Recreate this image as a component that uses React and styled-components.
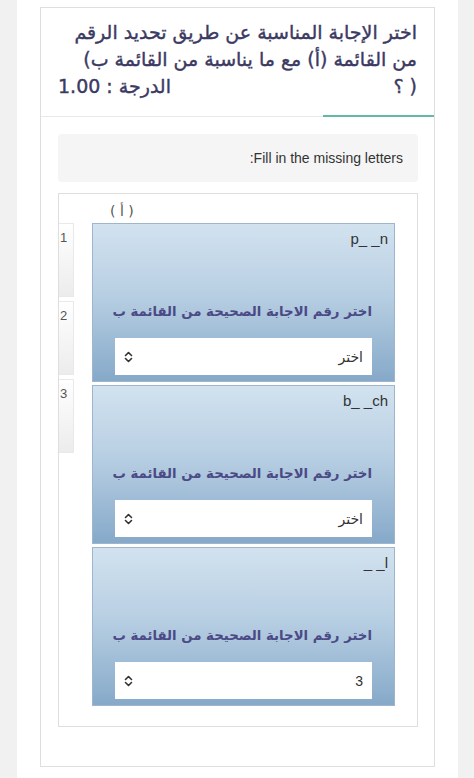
import React from "react";
import styled, { createGlobalStyle } from "styled-components";

const TITLE_INK = "#3c3a62";
const PROMPT_INK = "#4b4a86";
const LINE = "#dedede";

const GlobalStyle = createGlobalStyle`
  body {
    margin: 0;
    background: #f1f1f1;
    font-family: "Liberation Sans", "DejaVu Sans", sans-serif;
  }
`;

const Page = styled.div`
  margin: 0 16px 0 17px;
  min-height: 778px;
  box-sizing: border-box;
  background: #fff;
  padding: 7px 23px 12px;
`;

const Card = styled.div`
  border: 1px solid ${LINE};
  padding-bottom: 39px;
`;

const Head = styled.div`
  direction: rtl;
  padding: 11px 17px 16px 17px;
  color: ${TITLE_INK};
  font-family: "DejaVu Sans", sans-serif;
  font-size: 19px;
  line-height: 27px;
  -webkit-text-stroke: 0.4px ${TITLE_INK};
`;

const HeadLine = styled.div`
  display: flex;
  justify-content: space-between;
  white-space: nowrap;
`;

const Grade = styled.span`
  font-size: 19px;
`;

const Paren = styled.bdo``;

const Divider = styled.div`
  height: 1px;
  background: #e9e9e9;
  display: flex;
  justify-content: flex-end;
`;

const Accent = styled.div`
  width: 111px;
  height: 2px;
  margin-top: -1px;
  background: #62b9a8;
`;

const Body = styled.div`
  padding: 17px 16px 0 17px;
`;

const Instruction = styled.div`
  direction: rtl;
  background: #f5f5f5;
  border-radius: 4px;
  height: 48px;
  display: flex;
  align-items: center;
  padding: 0 15px;
  font-size: 14px;
  color: #333;
`;

const MatchBox = styled.div`
  margin-top: 11px;
  border: 1px solid ${LINE};
  padding-bottom: 20px;
  display: grid;
  grid-template-columns: 15px 303px;
  column-gap: 18px;
`;

const ColHead = styled.div`
  grid-column: 2;
  height: 29px;
  box-sizing: border-box;
  padding: 5px 0 0 18px;
  display: flex;
  align-items: center;
  color: #555;
  font-size: 14px;
  font-family: "DejaVu Sans", sans-serif;
  letter-spacing: 1px;
`;

const Numbers = styled.div`
  grid-column: 1;
  display: flex;
  flex-direction: column;
  gap: 4px;
`;

const NumCell = styled.div`
  height: 74px;
  box-sizing: border-box;
  border: 1px solid #e9e9e9;
  border-left: none;
  background: linear-gradient(#ffffff, #ececec);
  padding: 6px 0 0 1px;
  font-size: 13px;
  color: #555;
`;

const Items = styled.div`
  grid-column: 2;
  display: flex;
  flex-direction: column;
  gap: 3px;
`;

const Item = styled.div`
  direction: rtl;
  height: 159px;
  box-sizing: border-box;
  border: 1px solid #9db6cd;
  background: linear-gradient(#d2e2ef 0%, #b8cfe3 45%, #86a9c9 100%);
  padding: 5px 6px 7px 22px;
  display: flex;
  flex-direction: column;
`;

const Word = styled.div`
  font-size: 15px;
  line-height: 20px;
  color: #333;
`;

const Prompt = styled.div`
  margin: 51px 16px 0 0;
  font-family: "DejaVu Sans", sans-serif;
  font-weight: bold;
  font-size: 13.3px;
  line-height: 24px;
  white-space: nowrap;
  color: ${PROMPT_INK};
`;

const Select = styled.div`
  flex-shrink: 0;
  margin: 14px 16px 0 0;
  height: 37px;
  background: #fff;
  display: flex;
  align-items: center;
  justify-content: space-between;
  padding: 0 9px 0 0;
  font-size: 14px;
  color: #333;
  font-family: "Liberation Sans", "DejaVu Sans", sans-serif;
`;

const Chevrons = styled.svg`
  margin-left: 9px;
`;

const UpDown = () => (
  <Chevrons width="9" height="12" viewBox="0 0 9 12">
    <path
      d="M1.5 4.5 L4.5 1.5 L7.5 4.5 M1.5 7.5 L4.5 10.5 L7.5 7.5"
      fill="none"
      stroke="#333"
      strokeWidth="1.6"
      strokeLinecap="round"
      strokeLinejoin="round"
    />
  </Chevrons>
);

const items = [
  { word: "p_ _n", value: "اختر" },
  { word: "b_ _ch", value: "اختر" },
  { word: "l_ _", value: "3" },
];

export default function App() {
  return (
    <>
      <GlobalStyle />
      <Page>
        <Card>
          <Head>
            <HeadLine>اختر الإجابة المناسبة عن طريق تحديد الرقم</HeadLine>
            <HeadLine>
              <span>
                من القائمة (أ) مع ما يناسبة من القائمة ب<Paren dir="ltr">(</Paren>
              </span>
            </HeadLine>
            <HeadLine>
              <Paren dir="ltr">؟ )</Paren>
              <Grade>الدرجة : 1.00</Grade>
            </HeadLine>
          </Head>
          <Divider>
            <Accent />
          </Divider>
          <Body>
            <Instruction>Fill in the missing letters:</Instruction>
            <MatchBox>
              <ColHead>( أ )</ColHead>
              <Numbers>
                {[1, 2, 3].map((n) => (
                  <NumCell key={n}>{n}</NumCell>
                ))}
              </Numbers>
              <Items>
                {items.map((it) => (
                  <Item key={it.word}>
                    <Word>{it.word}</Word>
                    <Prompt>اختر رقم الاجابة الصحيحة من القائمة ب</Prompt>
                    <Select>
                      <span>{it.value}</span>
                      <UpDown />
                    </Select>
                  </Item>
                ))}
              </Items>
            </MatchBox>
          </Body>
        </Card>
      </Page>
    </>
  );
}
